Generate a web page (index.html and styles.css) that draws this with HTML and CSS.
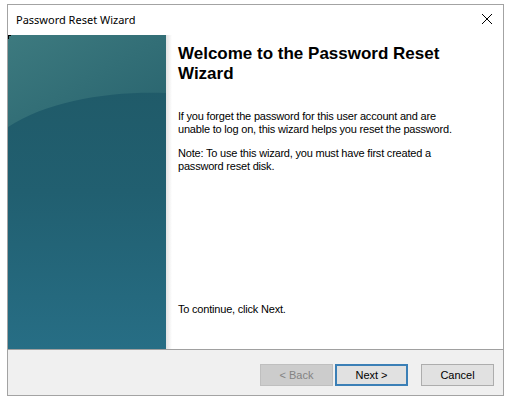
FILE: index.html
```html
<!DOCTYPE html>
<html>
<head>
<meta charset="utf-8">
<link rel="stylesheet" href="styles.css">
</head>
<body>
<div class="window">
  <div class="titlebar">
    <span class="title">Password Reset Wizard</span>
    <svg class="close" width="12" height="12" viewBox="0 0 12 12"><path d="M1 1L11 11M11 1L1 11" stroke="#000" stroke-width="1"/></svg>
  </div>
  <div class="main">
    <div class="banner">
      <svg width="158" height="314" viewBox="0 0 158 314" preserveAspectRatio="none">
        <defs>
          <linearGradient id="top" x1="0" y1="0" x2="1" y2="1">
            <stop offset="0" stop-color="#3d7a7f"/>
            <stop offset="1" stop-color="#28636e"/>
          </linearGradient>
          <linearGradient id="bot" x1="0" y1="0" x2="0" y2="1">
            <stop offset="0" stop-color="#1f5865"/>
            <stop offset="0.5" stop-color="#215f70"/>
            <stop offset="1" stop-color="#276e85"/>
          </linearGradient>
        </defs>
        <rect width="158" height="314" fill="url(#bot)"/>
        <path d="M0 0H158V58C100 56 40 66 0 92Z" fill="url(#top)"/>
        <path d="M0 0h3v1h-2v3h-1z" fill="#000"/>
      </svg>
      <div class="shade"></div>
    </div>
    <div class="content">
      <h1>Welcome to the Password Reset Wizard</h1>
      <p>If you forget the password for this user account and are unable to log on, this wizard helps you reset the password.</p>
      <p>Note: To use this wizard, you must have first created a password reset disk.</p>
      <p class="continue">To continue, click Next.</p>
    </div>
  </div>
  <div class="footer">
    <button class="btn disabled">&lt; Back</button>
    <button class="btn default">Next &gt;</button>
    <button class="btn cancel">Cancel</button>
  </div>
</div>
</body>
</html>
```
FILE: styles.css
```css
html, body {
  margin: 0;
  background: #fff;
}
.window {
  margin: 4px 0 0 7px;
  width: 495px;
  border: 1px solid #a3a3a3;
  background: #fff;
  font-family: "Liberation Sans", Arial, sans-serif;
}
.titlebar {
  height: 30px;
  display: flex;
  align-items: center;
  justify-content: space-between;
  padding: 0 10px 0 8px;
}
.title {
  font-family: "Noto Sans", "Open Sans", sans-serif;
  font-size: 11px;
  color: #000;
  margin-top: -1px;
}
.close {
  display: block;
  margin-top: -2px;
}
.main {
  display: flex;
  height: 314px;
}
.banner {
  position: relative;
  width: 158px;
  flex: none;
}
.banner svg {
  display: block;
}
.shade {
  position: absolute;
  top: 0;
  left: 158px;
  width: 6px;
  height: 100%;
  background: linear-gradient(to right, #e2e2e2, #ffffff);
}
.content {
  padding: 9px 0 0 12px;
  display: flex;
  flex-direction: column;
  flex: 1;
}
h1 {
  margin: 0;
  font-size: 17px;
  line-height: 20px;
  font-weight: bold;
  width: 290px;
  color: #000;
}
p {
  margin: 26px 0 0 0;
  font-size: 11px;
  line-height: 13px;
  letter-spacing: -0.2px;
  width: 290px;
  color: #000;
}
p + p {
  margin-top: 11px;
}
.content p.continue {
  margin-top: auto;
  margin-bottom: 33px;
}
.footer {
  border-top: 1px solid #a0a0a0;
  background: #f0f0f0;
  height: 46px;
  display: flex;
  align-items: flex-start;
  justify-content: flex-end;
  padding: 14px 9px 0 0;
  box-sizing: border-box;
}
.btn {
  height: 22px;
  width: 73px;
  font-family: "Liberation Sans", Arial, sans-serif;
  font-size: 11px;
  background: #e1e1e1;
  border: 1px solid #adadad;
  color: #000;
  padding: 0;
  margin: 0;
}
.btn.disabled {
  background: #cccccc;
  border-color: #bfbfbf;
  color: #838383;
}
.btn.default {
  margin-left: 2px;
  border: 2px solid #3b7fb6;
}
.btn.cancel {
  margin-left: 13px;
}
```
